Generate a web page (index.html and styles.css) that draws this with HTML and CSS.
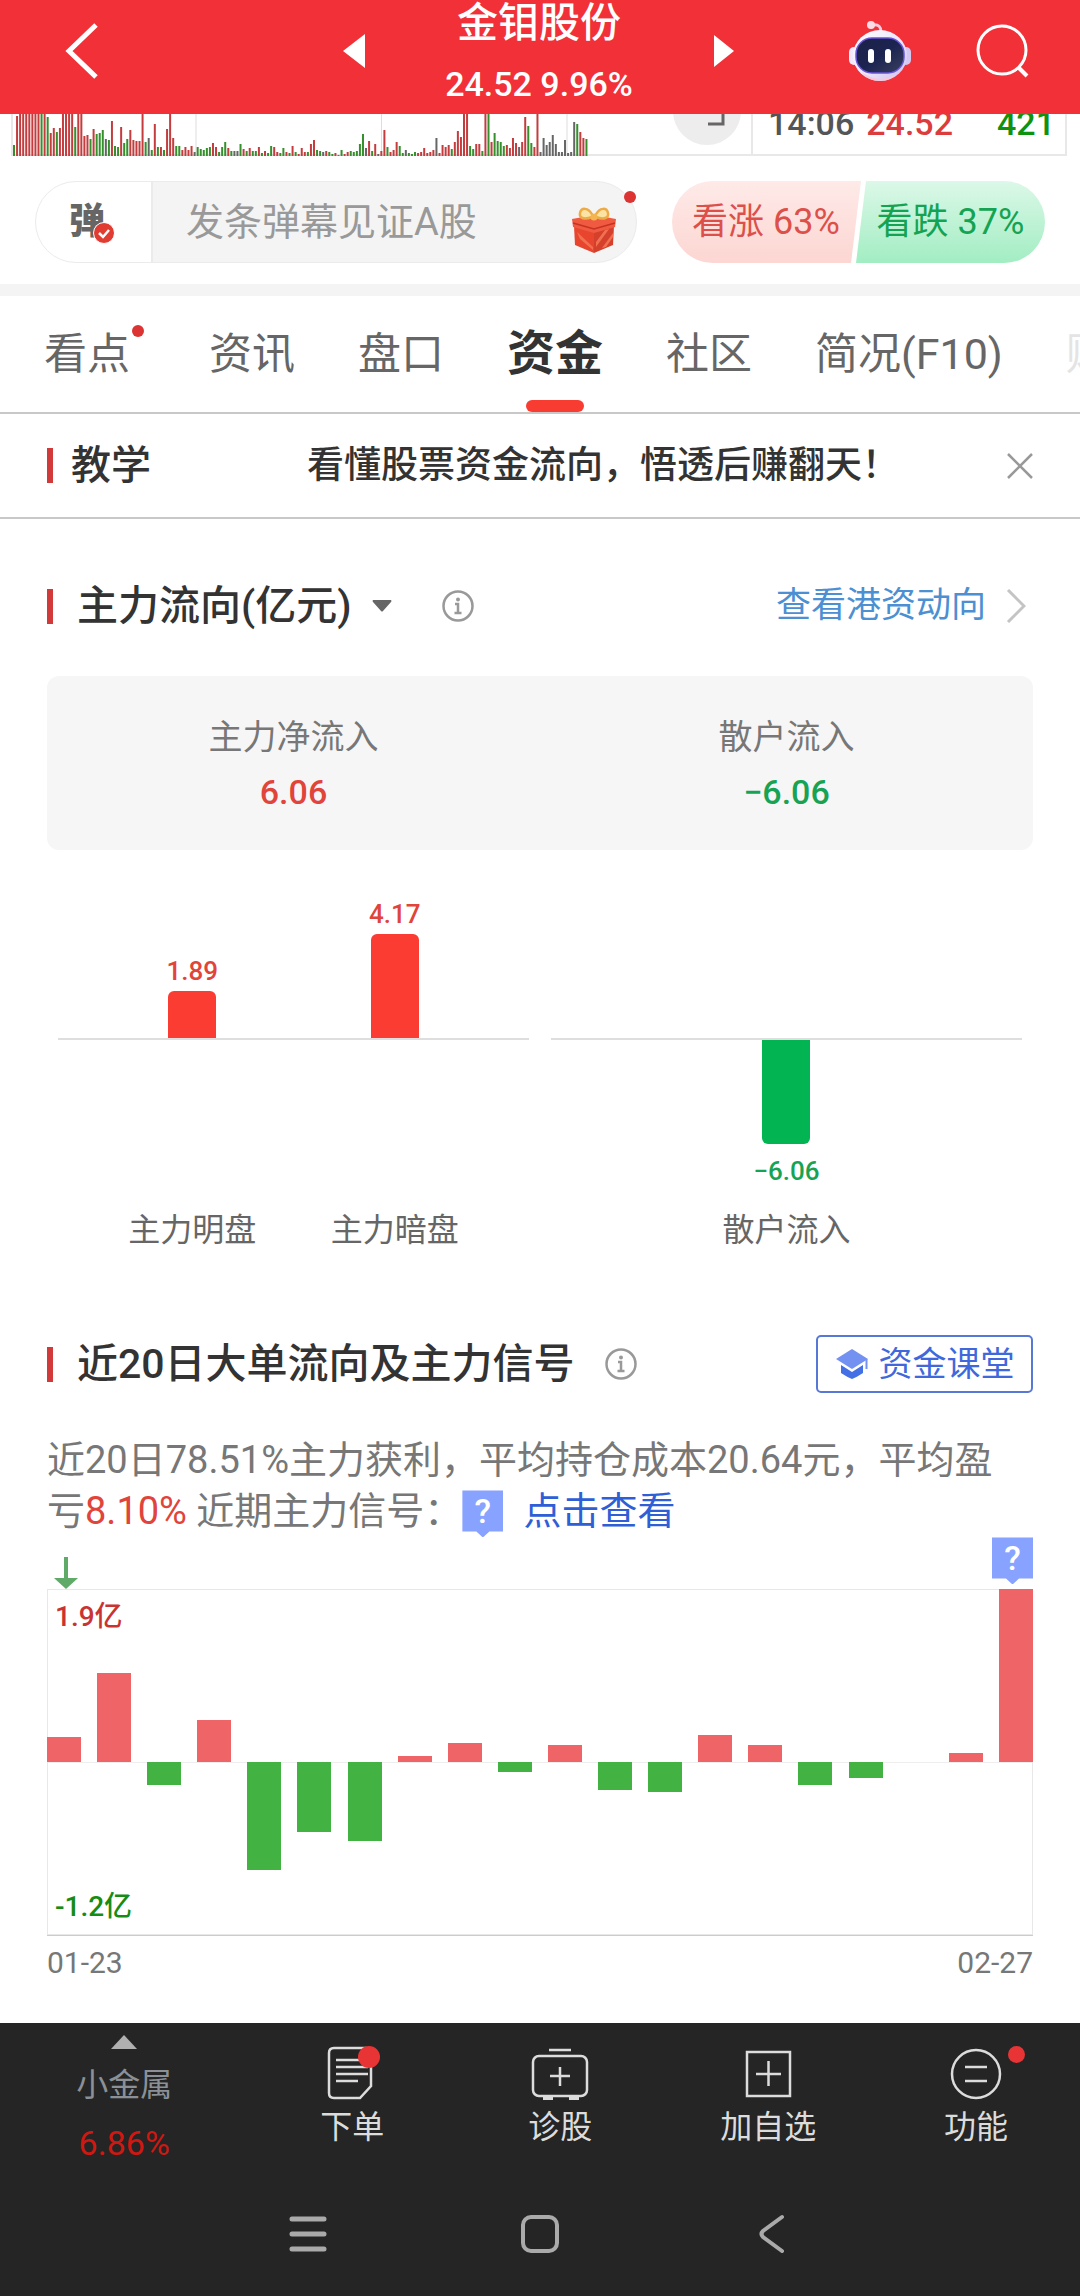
FILE: index.html
```html
<!DOCTYPE html>
<html lang="zh-CN">
<head>
<meta charset="utf-8">
<meta name="viewport" content="width=device-width, initial-scale=1">
<title>金钼股份 - 资金</title>
<link rel="stylesheet" href="styles.css">
</head>
<body>
<header class="topbar">
  <button class="icon-btn back" aria-label="返回">
    <svg width="36" height="58" viewBox="0 0 36 58"><path d="M32 3 5 29l27 26" fill="none" stroke="#fff" stroke-width="5"/></svg>
  </button>
  <div class="stock">
    <button class="icon-btn" aria-label="上一只"><svg width="22" height="34" viewBox="0 0 22 34"><path d="M22 0v34L0 17z" fill="#fff"/></svg></button>
    <div class="stock-text">
      <h1 class="stock-name">金钼股份</h1>
      <p class="stock-price">24.52 9.96%</p>
    </div>
    <button class="icon-btn" aria-label="下一只"><svg width="22" height="34" viewBox="0 0 22 34"><path d="M1 1v32l20-16z" fill="#fff"/></svg></button>
  </div>
  <div class="top-actions">
    <button class="icon-btn" aria-label="智能助手">
      <svg width="64" height="62" viewBox="0 0 64 62">
        <defs>
          <linearGradient id="head" x1="0" y1="0" x2="1" y2="1"><stop offset="0" stop-color="#fff"/><stop offset=".55" stop-color="#ece6fb"/><stop offset="1" stop-color="#c9bdf0"/></linearGradient>
          <linearGradient id="visor" x1="0" y1="0" x2="1" y2="1"><stop offset="0" stop-color="#1c2147"/><stop offset=".5" stop-color="#1b2450"/><stop offset="1" stop-color="#39405f"/></linearGradient>
        </defs>
        <path d="M24 5c7-1 9 2 9 7" fill="none" stroke="#f6c9dc" stroke-width="3"/>
        <circle cx="23" cy="5" r="4" fill="#fbdce6"/>
        <rect x="1" y="27" width="10" height="18" rx="5" fill="#f3e9fa"/>
        <rect x="53" y="27" width="10" height="18" rx="5" fill="#d3c8f2"/>
        <ellipse cx="32" cy="35.500" rx="27" ry="25.500" fill="url(#head)"/>
        <path d="M14 52c10 9 27 9 36 0-4 6-10 9-18 9s-14-3-18-9z" fill="#f7c9dd"/>
        <rect x="8" y="18" width="48" height="35" rx="16" fill="url(#visor)" stroke="#6a55d8" stroke-width="1.500"/>
        <rect x="20" y="29" width="6" height="14" rx="3" fill="#fff"/>
        <rect x="37" y="29" width="6" height="14" rx="3" fill="#fff"/>
      </svg>
    </button>
    <button class="icon-btn" aria-label="搜索">
      <svg width="54" height="54" viewBox="0 0 54 54"><g fill="none" stroke="#fff" stroke-width="3"><circle cx="26" cy="26" r="24"/><path d="m42 43 9 9" stroke-width="4"/></g></svg>
    </button>
  </div>
</header>

<main>
  <section class="market" aria-label="成交量">
    <div class="volume">
      <svg id="volume-bars" class="volume-bars" viewBox="0 0 740 42" preserveAspectRatio="none" aria-hidden="true"></svg>
      <button class="expand" aria-label="展开"><svg width="68" height="68" viewBox="0 0 68 68"><circle cx="34" cy="34" r="34" fill="#ededed"/><path d="M35 47h15V32" fill="none" stroke="#666" stroke-width="3"/></svg></button>
    </div>
    <div class="tick"><span>14:06</span><span class="tick-price">24.52</span><span class="tick-vol">421</span></div>
  </section>

  <section class="talk">
    <div class="talk-box">
      <button class="danmu" aria-label="弹幕开关">弹<svg class="danmu-check" width="22" height="22" viewBox="0 0 22 22"><circle cx="11" cy="11" r="10.500" fill="#e13c32" stroke="#fff"/><path d="m6 11 4 4 6-7" fill="none" stroke="#fff" stroke-width="2.500"/></svg></button>
      <input class="talk-input" type="text" placeholder="发条弹幕见证A股" aria-label="发条弹幕">
      <button class="gift" aria-label="礼物">
        <svg width="44" height="48" viewBox="0 0 44 48">
          <path d="M2 20 22 26v21L3 39z" fill="#e8452f"/><path d="M42 20 22 26v21l19-8z" fill="#d5402c"/>
          <path d="m30 42 11-15v4l-7 10zM24 36l9-12 4-1-13 18zM5 26l16 15v3L8 33z" fill="#f0704f"/>
          <path d="M0 13 22 9l22 4-1 8-21 6-21-6z" fill="#f05a41"/><path d="m1 17 21 6 21-6" fill="none" stroke="#c43323" stroke-width="1.500"/>
          <path d="M20 11C12 14 7 12 8 7s8-7 13 3zM24 11c8 3 13 1 12-4s-8-7-13 3z" fill="#fbe3a5" stroke="#eeaa45" stroke-width="2.500"/>
          <circle cx="22" cy="11" r="3.500" fill="#f3b550"/>
        </svg>
      </button>
      <i class="dot talk-dot"></i>
    </div>
    <div class="vote">
      <button class="vote-btn vote-up">看涨 63%</button>
      <button class="vote-btn vote-down">看跌 37%</button>
    </div>
  </section>

  <nav class="tabs">
    <a href="#" class="tab tab-new">看点<i class="dot tab-dot"></i></a>
    <a href="#" class="tab">资讯</a>
    <a href="#" class="tab">盘口</a>
    <a href="#" class="tab tab-active">资金</a>
    <a href="#" class="tab">社区</a>
    <a href="#" class="tab">简况(F10)</a>
    <a href="#" class="tab tab-faded">财</a>
  </nav>

  <section class="lesson">
    <h2 class="mark lesson-title">教学</h2>
    <a href="#" class="lesson-link">看懂股票资金流向，悟透后赚翻天！</a>
    <button class="icon-btn" aria-label="关闭"><svg width="26" height="26" viewBox="0 0 26 26"><path d="m1 1 24 24M25 1 1 25" stroke="#999" stroke-width="2.500"/></svg></button>
  </section>

  <section class="flow">
    <div class="head">
      <h2 class="mark head-title">主力流向(亿元)</h2>
      <button class="icon-btn caret" aria-label="切换单位"><svg width="20" height="12" viewBox="0 0 20 12"><path d="M1 0h18q1 1 0 2l-8 9q-1 1-2 0L1 2Q0 1 1 0z" fill="#666"/></svg></button>
      <button class="icon-btn info" aria-label="说明"><svg width="32" height="32" viewBox="0 0 32 32"><g fill="none" stroke="#999" stroke-width="2.500"><circle cx="16" cy="16" r="14.500"/><path d="M13 14h3v9M12.500 23h7"/></g><circle cx="16" cy="9.500" r="2" fill="#999"/></svg></button>
      <a href="#" class="more">查看港资动向<svg width="20" height="34" viewBox="0 0 20 34"><path d="m2 1 16 16L2 33" fill="none" stroke="#c4c4c4" stroke-width="3"/></svg></a>
    </div>
    <dl class="summary">
      <div class="summary-cell"><dt>主力净流入</dt><dd class="up">6.06</dd></div>
      <div class="summary-cell"><dt>散户流入</dt><dd class="down">−6.06</dd></div>
    </dl>
    <div class="split">
      <div class="split-half">
        <div class="split-col">
          <div class="split-pos"><span class="split-value up">1.89</span><i class="split-bar bar-up" style="height:47px"></i></div>
          <div class="split-neg"></div>
          <span class="split-label">主力明盘</span>
        </div>
        <div class="split-col">
          <div class="split-pos"><span class="split-value up">4.17</span><i class="split-bar bar-up" style="height:104px"></i></div>
          <div class="split-neg"></div>
          <span class="split-label">主力暗盘</span>
        </div>
      </div>
      <div class="split-half">
        <div class="split-col">
          <div class="split-pos"></div>
          <div class="split-neg"><i class="split-bar bar-down" style="height:104px"></i><span class="split-value down">−6.06</span></div>
          <span class="split-label">散户流入</span>
        </div>
      </div>
    </div>
  </section>

  <section class="signal">
    <div class="head head-tall">
      <h2 class="mark head-title">近20日大单流向及主力信号</h2>
      <button class="icon-btn info" aria-label="说明"><svg width="32" height="32" viewBox="0 0 32 32"><g fill="none" stroke="#999" stroke-width="2.500"><circle cx="16" cy="16" r="14.500"/><path d="M13 14h3v9M12.500 23h7"/></g><circle cx="16" cy="9.500" r="2" fill="#999"/></svg></button>
      <button class="class-btn"><svg width="34" height="32" viewBox="0 0 34 32"><path d="m17 1 16 10-16 10L1 11z" fill="#7391f0"/><path d="m6 17 11 7 11-7v8q-6 4-11 6-5-2-11-6z" fill="#4470e6"/><path d="M31.500 11v10" stroke="#7391f0" stroke-width="2"/></svg>资金课堂</button>
    </div>
    <p class="note">近20日78.51%主力获利，平均持仓成本20.64元，平均盈亏<span class="note-up">8.10%</span> 近期主力信号：<span class="ask">?</span><a href="#" class="note-link">点击查看</a></p>
    <div class="markers">
      <svg width="26" height="32" viewBox="0 0 26 32"><path d="M13 0v22" stroke="#5faa66" stroke-width="4"/><path d="M1 21h24L13 32z" fill="#5faa66"/></svg>
      <span class="ask">?</span>
    </div>
    <div class="bars">
      <span class="bars-max">1.9亿</span>
      <span class="bars-min">-1.2亿</span>
      <i class="b p" style="height:25px"></i>
      <i class="b p" style="height:89px"></i>
      <i class="b n" style="height:23px"></i>
      <i class="b p" style="height:42px"></i>
      <i class="b n" style="height:108px"></i>
      <i class="b n" style="height:70px"></i>
      <i class="b n" style="height:79px"></i>
      <i class="b p" style="height:6px"></i>
      <i class="b p" style="height:19px"></i>
      <i class="b n" style="height:10px"></i>
      <i class="b p" style="height:17px"></i>
      <i class="b n" style="height:28px"></i>
      <i class="b n" style="height:30px"></i>
      <i class="b p" style="height:27px"></i>
      <i class="b p" style="height:17px"></i>
      <i class="b n" style="height:23px"></i>
      <i class="b n" style="height:16px"></i>
      <i class="b p" style="height:0px"></i>
      <i class="b p" style="height:9px"></i>
      <i class="b p" style="height:173px"></i>
    </div>
    <div class="dates"><span>01-23</span><span>02-27</span></div>
  </section>
</main>

<footer class="bottom">
  <nav class="actions">
    <a href="#" class="sector">
      <svg width="26" height="14" viewBox="0 0 26 14"><path d="M13 0 26 14H0z" fill="#b0b0b0"/></svg>
      <span class="sector-name">小金属</span>
      <span class="sector-pct">6.86%</span>
    </a>
    <a href="#" class="action">
      <svg width="56" height="56" viewBox="0 0 56 56"><g fill="none" stroke="#dcdcdc" stroke-width="2.500"><path d="M10 3h32q5 0 5 5v33L36 53H10q-5 0-5-5V8q0-5 5-5z"/><path d="M12 15h28M12 22h32M12 29h32M12 36h22"/></g><circle cx="45" cy="12" r="11" fill="#e83434"/></svg>
      <span>下单</span>
    </a>
    <a href="#" class="action">
      <svg width="60" height="56" viewBox="0 0 60 56"><g fill="none" stroke="#dcdcdc" stroke-width="2.500"><rect x="3" y="11" width="54" height="40" rx="6"/><path d="M19 5h22M30 22v19M20 31h20"/><path d="M13 53h10M39 53h10" stroke-width="4"/></g></svg>
      <span>诊股</span>
    </a>
    <a href="#" class="action">
      <svg width="56" height="56" viewBox="0 0 56 56"><path d="M7 7h43v44H7zM28.500 16v25M16 29h25" fill="none" stroke="#dcdcdc" stroke-width="2.500"/></svg>
      <span>加自选</span>
    </a>
    <a href="#" class="action">
      <svg width="56" height="56" viewBox="0 0 56 56"><g fill="none" stroke="#dcdcdc" stroke-width="2.500"><circle cx="28" cy="29" r="24"/><path d="M17 22h22M17 36h22"/></g></svg>
      <span>功能</span>
      <i class="dot action-dot"></i>
    </a>
  </nav>
  <nav class="system">
    <button class="icon-btn" aria-label="最近任务"><svg width="40" height="40" viewBox="0 0 40 40"><path d="M4 5h32M4 20h32M4 35h32" stroke="#aaa" stroke-width="5" stroke-linecap="round"/></svg></button>
    <button class="icon-btn" aria-label="主屏幕"><svg width="40" height="40" viewBox="0 0 40 40"><rect x="3" y="3" width="34" height="34" rx="8" fill="none" stroke="#aaa" stroke-width="4"/></svg></button>
    <button class="icon-btn" aria-label="返回"><svg width="40" height="40" viewBox="0 0 40 40"><path d="M30 3 11 17q-3 3 0 6l19 14" fill="none" stroke="#aaa" stroke-width="4" stroke-linecap="round"/></svg></button>
  </nav>
</footer>
<script src="volume.js"></script>
</body>
</html>
```
FILE: styles.css
```css
* { box-sizing: border-box; }
body {
  margin: 0;
  background: #fff;
  color: #333;
  font-family: Roboto, "Noto Sans CJK SC", sans-serif;
}
h1, h2, p, dl, dd { margin: 0; }
a { color: inherit; text-decoration: none; }
button, input { font: inherit; color: inherit; border: 0; background: none; padding: 0; }
svg { display: block; flex: none; }
i { font-style: normal; }
.icon-btn { flex: none; }
.up { color: #e0443a; }
.down { color: #17a353; }
.dot { width: 12px; height: 12px; border-radius: 50%; background: #dc3333; }

/* top bar */
.topbar {
  display: grid;
  grid-template-columns: 279px 1fr auto;
  align-items: center;
  height: 114px;
  padding: 0 50px 12px 64px;
  background: #f13038;
  color: #fff;
}
.back { justify-self: start; }
.stock { display: flex; align-items: center; width: 392px; justify-content: space-between; }
.stock-text { text-align: center; }
.stock-name { font-size: 41px; font-weight: 500; line-height: 46px; }
.stock-price { margin-top: 20px; font-size: 34px; font-weight: 500; line-height: 36px; }
.top-actions { display: flex; align-items: center; gap: 64px; }

/* tail of the intraday chart */
.market { display: flex; height: 42px; padding: 0 13px 0 11px; overflow: hidden; }
.volume {
  flex: 1;
  display: flex;
  position: relative;
  justify-content: flex-end;
  align-items: flex-end;
  border: solid #e8e8e8;
  border-width: 0 2px 2px;
  padding: 0 10px 9px 0;
}
.volume-bars { position: absolute; left: 0; top: 0; width: 100%; height: 42px; }
.expand { flex: none; position: relative; }
.tick {
  display: flex;
  flex: none;
  align-items: flex-end;
  gap: 12px;
  width: 314px;
  padding: 0 10px 9px 15px;
  border: solid #e8e8e8;
  border-width: 0 2px 2px 0;
  font-size: 34px;
  font-weight: 500;
  line-height: 44px;
  color: #555;
}
.tick-price { color: #dc3c3c; }
.tick-vol { margin-left: auto; color: #0f930f; }

/* comment row */
.talk { display: flex; gap: 35px; padding: 25px 35px 21px; border-bottom: 12px solid #f4f4f4; }
.talk-box {
  display: flex;
  flex: 1;
  min-width: 0;
  position: relative;
  align-items: center;
  height: 82px;
  border: 1px solid #ebebeb;
  border-radius: 41px;
  background: linear-gradient(90deg, #fff 115px, #ebebeb 115px, #ebebeb 117px, #f4f4f4 117px);
}
.danmu { position: relative; flex: none; width: 116px; padding-left: 2px; text-align: left; text-indent: 31px; font-size: 36px; font-weight: 900; line-height: 80px; color: #666; }
.danmu-check { position: absolute; left: 57px; top: 40px; }
.talk-input { flex: 1; min-width: 0; padding-left: 34px; font-size: 38px; line-height: 50px; outline: 0; }
.talk-input::placeholder { color: #999; opacity: 1; }
.gift { flex: none; margin: 16px 20px 0 0; }
.talk-dot { position: absolute; right: 0; top: 9px; }
.vote { display: flex; flex: none; }
.vote-btn { width: 189px; height: 82px; font-size: 36px; line-height: 50px; }
.vote-up {
  padding-right: 1px;
  border-radius: 41px 0 0 41px;
  background: linear-gradient(#feeae8, #fcd6d2);
  clip-path: polygon(0 0, 100% 0, calc(100% - 10px) 100%, 0 100%);
  color: #dc5049;
}
.vote-down {
  margin-left: -5px;
  border-radius: 0 41px 41px 0;
  background: linear-gradient(#dcf8e8, #a2edc2);
  clip-path: polygon(10px 0, 100% 0, 100% 100%, 0 100%);
  color: #14a353;
}

/* tabs */
.tabs {
  display: flex;
  gap: 63px;
  height: 118px;
  padding-left: 44px;
  overflow: hidden;
  border-bottom: 2px solid #c8c8c8;
  font-size: 43px;
  line-height: 116px;
  white-space: nowrap;
  color: #666;
}
.tab { flex: none; position: relative; }
.tab-new { padding-right: 16px; }
.tab-dot { position: absolute; right: 2px; top: 29px; }
.tab-active { font-size: 48px; font-weight: 700; color: #333; }
.tab-active::after { content: ""; position: absolute; left: 50%; bottom: 0; width: 58px; height: 12px; margin-left: -29px; border-radius: 6px; background: #f93c32; }
.tab-faded { color: #e4e4e4; }

/* lesson strip */
.lesson { display: flex; align-items: center; height: 105px; padding: 0 47px; border-bottom: 2px solid #c8c8c8; }
.mark { display: flex; align-items: center; font-weight: 500; }
.mark::before { content: ""; width: 6px; height: 35px; background: #d23a3a; }
.lesson-title { gap: 18px; font-size: 40px; line-height: 50px; }
.lesson-link { margin: 0 108px 0 auto; font-size: 37px; font-weight: 500; line-height: 50px; }

/* section heads */
.head { display: flex; align-items: center; height: 40px; }
.head-tall { height: 58px; }
.head-title { gap: 24px; font-size: 41px; line-height: 40px; }
.caret { margin-left: 20px; }
.info { margin-left: 30px; }
.caret + .info { margin-left: 50px; }
.more { display: flex; align-items: center; gap: 20px; margin: 0 7px 0 auto; font-size: 35px; line-height: 40px; color: #4c8fd2; }

/* main flow */
.flow { padding: 67px 47px 0; }
.summary { display: flex; height: 174px; margin-top: 50px; padding-top: 40px; border-radius: 12px; background: #f6f6f6; text-align: center; }
.summary-cell { flex: 1; }
.summary dt { font-size: 34px; line-height: 42px; color: #777; }
.summary dd { margin-top: 13px; font-size: 34px; font-weight: 500; line-height: 42px; }
.split { display: flex; gap: 22px; padding: 0 11px; }
.split-half { display: flex; flex: 1; justify-content: center; background: linear-gradient(#dedede, #dedede) 0 188px / 100% 2px no-repeat; }
.split-col { display: flex; flex: 0 0 43%; flex-direction: column; align-items: center; }
.split-pos { display: flex; flex-direction: column; align-items: center; justify-content: flex-end; height: 188px; }
.split-neg { display: flex; flex-direction: column; align-items: center; height: 172px; padding-top: 2px; }
.split-value { font-size: 26px; font-weight: 500; line-height: 28px; }
.split-pos .split-value { margin-bottom: 6px; }
.split-neg .split-value { margin-top: 13px; }
.split-bar { width: 48px; }
.bar-up { border-radius: 6px 6px 0 0; background: #fb3c32; }
.bar-down { border-radius: 0 0 6px 6px; background: #02b552; }
.split-label { font-size: 32px; line-height: 40px; color: #666; }

/* 20-day signals */
.signal { padding: 85px 47px 45px; }
.class-btn { display: flex; align-items: center; justify-content: center; gap: 10px; width: 217px; height: 58px; margin-left: auto; border: 2px solid #5878d6; border-radius: 5px; font-size: 34px; line-height: 40px; color: #4068dc; }
.note { margin-top: 42px; padding-right: 8px; font-size: 38px; line-height: 51px; color: #777; }
.note-up { color: #e0443a; }
.note-link { margin-left: 20px; color: #2f5fd6; }
.ask {
  display: inline-block;
  width: 41px;
  height: 47px;
  background: #88a2ff;
  clip-path: polygon(0 0, 100% 0, 100% 41px, 27px 41px, 50% 100%, 14px 41px, 0 41px);
  color: #fff;
  font-size: 34px;
  font-weight: 500;
  line-height: 42px;
  text-align: center;
  vertical-align: middle;
}
.markers { display: flex; justify-content: space-between; align-items: flex-end; height: 52px; padding-left: 6px; }
.markers .ask { align-self: flex-start; }
.bars {
  position: relative;
  display: flex;
  justify-content: space-between;
  align-items: flex-start;
  height: 347px;
  background: linear-gradient(#eee, #eee) 0 173px / 100% 1px no-repeat;
  box-shadow: inset 0 0 0 1px #e8e8e8;
  border-bottom: 1px solid #ccc;
}
.b { width: 34px; align-self: flex-end; }
.p { margin-bottom: 173px; background: #ef6466; }
.n { align-self: flex-start; margin-top: 173px; background: #42b243; }
.bars-max, .bars-min { position: absolute; left: 8px; font-size: 28px; font-weight: 500; line-height: 32px; }
.bars-max { top: 12px; color: #c93333; }
.bars-min { bottom: 12px; color: #168c14; }
.dates { display: flex; justify-content: space-between; margin-top: 12px; font-size: 30px; line-height: 30px; color: #777; }

/* bottom bars */
.bottom { background: #252525; color: #dcdcdc; }
.actions { display: grid; grid-template-columns: 23% repeat(4, 1fr); height: 149px; font-size: 32px; line-height: 40px; }
.sector { display: flex; flex-direction: column; align-items: center; padding-top: 12px; }
.sector-name { margin-top: 16px; color: #8b9096; }
.sector-pct { margin-top: 18px; font-size: 34px; color: #d01812; }
.action { display: flex; flex-direction: column; align-items: center; gap: 6px; padding-top: 22px; position: relative; }
.action-dot { position: absolute; left: 50%; top: 23px; width: 17px; height: 17px; margin-left: 32px; background: #e83434; }
.system { display: flex; justify-content: center; align-items: center; gap: 192px; height: 124px; }
```
FILE: volume.js
```js
// One entry per minute: colour code (r up, g down, k flat) and bar height.
const minutes = `g11 r40 r42 r42 r42 r42 r42 r42 r42 g42 r42 g39 r23 r28 g24 r28 r42 r42 r42 r42 g29 r42 r42 r20 r21 g17 r27 g22 g23 g26 k17 g16 r35 g10 g9 r29 g13 g17 r26 r16 r15 r15 r42 g14 k18 g6 r32 g9 r9 g6 r27 r42 r18 g10 g10 r6 r9 r6 r10 k4 g9 g7 g6 g8 g9 r13 r9 g4 g9 g14 r8 g5 k5 k5 g12 r7 g5 r8 g5 g5 r9 g3 r5 g3 g10 r9 r4 g3 g8 r4 g3 r10 g4 r2
r8 r4 g4 r12 r16 g6 g5 k4 r5 g4 g2 r3 g1 g6 r2 r4 g5 g4 g5 g12 g22 k8 r15 g5 r12 k2 r5 r26 g9 r4 r6 r14 g10 g3 k6 g3 g2 g4 r3 r4 r8 r3 r4 r6 k18 r3 r11 r9 r11 g7 r14 r25 r19 r42 r42 g10 g7 r12 r12 g5 r42 g42 r14 g23 g15 g14 g10 r11 r8 r18 r13 k9 r14 r39 g30 g13 r9 r42 k4 k18 k11 k14 k21 k12 k4 k4 k16 k3 k4 k34 g32 r24 r18 g17`.split(/\s+/);
const colours = { r: '#c43c3e', g: '#348f2c', k: '#666' };
const grid = [183, 369, 555].map(x => `<rect x="${x}" y="0" width="1" height="42" fill="#ddd"/>`);
const last = minutes.length - 1;
const bars = minutes.map((m, i) => {
  const h = Number(m.slice(1));
  const x = (574 * i / last).toFixed(2);
  return `<rect x="${x}" y="${42 - h}" width="2" height="${h}" fill="${colours[m[0]]}"/>`;
});
document.getElementById('volume-bars').innerHTML = grid.concat(bars).join('');
```
